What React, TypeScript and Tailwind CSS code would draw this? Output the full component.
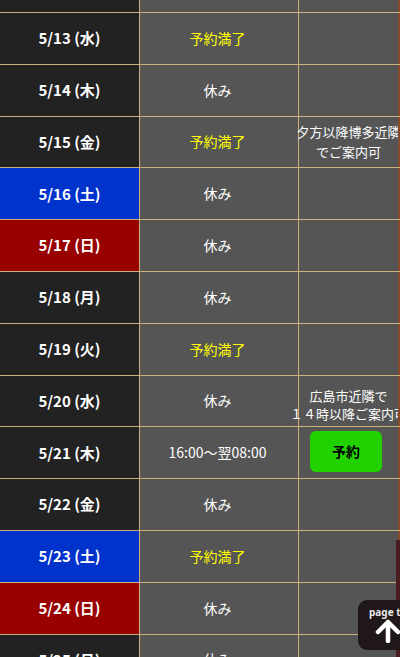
import React from "react";

type Row = {
  date: string;
  kind?: "sat" | "sun";
  status: string;
  yellow?: boolean;
  note?: string[];
  noteTight?: boolean;
  button?: boolean;
};

const rows: Row[] = [
  { date: "5/12 (火)", status: "休み" },
  { date: "5/13 (水)", status: "予約満了", yellow: true },
  { date: "5/14 (木)", status: "休み" },
  { date: "5/15 (金)", status: "予約満了", yellow: true, note: ["夕方以降博多近隣", "でご案内可"] },
  { date: "5/16 (土)", kind: "sat", status: "休み" },
  { date: "5/17 (日)", kind: "sun", status: "休み" },
  { date: "5/18 (月)", status: "休み" },
  { date: "5/19 (火)", status: "予約満了", yellow: true },
  { date: "5/20 (水)", status: "休み", note: ["広島市近隣で", "１４時以降ご案内可"], noteTight: true },
  { date: "5/21 (木)", status: "16:00〜翌08:00", button: true },
  { date: "5/22 (金)", status: "休み" },
  { date: "5/23 (土)", kind: "sat", status: "予約満了", yellow: true },
  { date: "5/24 (日)", kind: "sun", status: "休み" },
  { date: "5/25 (月)", status: "休み" },
];

export default function App() {
  return (
    <div
      className="relative w-[400px] h-[657px] overflow-hidden bg-[#555555]"
      style={{ fontFamily: '"Noto Sans CJK JP", "Noto Sans", sans-serif' }}
    >
      <div className="-mt-[38.8px] flex flex-col">
        {rows.map((r) => (
          <div key={r.date} className="flex h-[51.8px] border-b border-[#c9b07c]">
            <div
              className={
                "w-[140px] shrink-0 flex items-center justify-center border-r border-[#c9b07c] text-white font-bold text-[15px] " +
                (r.kind === "sat" ? "bg-[#0033cc]" : r.kind === "sun" ? "bg-[#990000]" : "bg-[#222222]")
              }
            >
              {r.date}
            </div>
            <div
              className={
                "w-[159px] shrink-0 flex items-center justify-center border-r border-[#c9b07c] bg-[#555555] text-[14px] pr-[3px] " +
                (r.yellow ? "text-[#ffff00]" : "text-white")
              }
            >
              {r.status}
            </div>
            <div className="w-[99px] shrink-0 flex items-center justify-center bg-[#555555] text-white text-[13px]">
              {r.note && (
                <div
                  className={
                    "flex flex-col items-center whitespace-nowrap " +
                    (r.noteTight ? "leading-[18px] mt-[8px]" : "leading-[20px]")
                  }
                >
                  {r.note.map((n) => (
                    <span key={n}>{n}</span>
                  ))}
                </div>
              )}
              {r.button && (
                <div className="w-[72px] h-[41px] mr-[5px] mb-[2px] rounded-[6px] bg-[#22d200] flex items-center justify-center text-black font-bold text-[14px]">
                  予約
                </div>
              )}
            </div>
            <div className="w-[2px] shrink-0 bg-[#8a4a2a]" />
          </div>
        ))}
      </div>
      <div className="absolute right-0 top-[540px] w-[4px] h-[117px] bg-[#4a1e1e]" />
      <div className="absolute left-[358px] top-[600px] w-[60px] h-[50px] rounded-[9px] bg-[#201818] flex flex-col items-start pl-[11px] pt-[6px]">
        <span className="text-[#e8e8e8] font-bold text-[10px] leading-[12px] whitespace-nowrap" style={{ fontFamily: '"Noto Sans", sans-serif' }}>
          page top
        </span>
        <svg width="26" height="24" viewBox="0 0 26 24" className="mt-[1px] ml-[6px]">
          <path d="M13 22 V4 M3 13 L13 3 L23 13" stroke="white" strokeWidth="4.5" fill="none" strokeLinecap="round" strokeLinejoin="round" />
        </svg>
      </div>
    </div>
  );
}
